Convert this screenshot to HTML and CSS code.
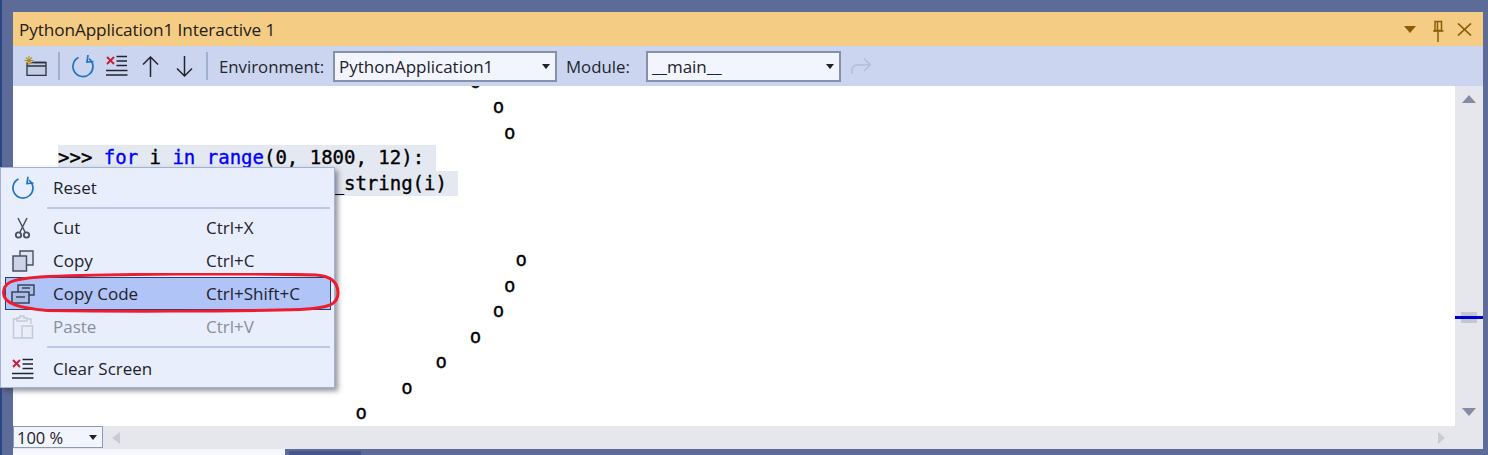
FILE: index.html
```html
<!DOCTYPE html>
<html lang="en">
<head>
<meta charset="utf-8">
<title>PythonApplication1 Interactive 1</title>
<link rel="stylesheet" href="styles.css">
</head>
<body>
<div class="shell">
  <div class="window">
    <header class="titlebar">
      <span class="title">PythonApplication1 Interactive 1</span>
      <div class="title-actions">
        <svg class="ti-menu" width="12" height="7" viewBox="0 0 12 7"><path d="M0 0h12L6 7z" fill="#8a5c06"/></svg>
        <svg class="ti-pin" width="11" height="26" viewBox="0 0 11 26"><path d="M2 3.500h6.500v9H2z M2 3.500h2.500v9" fill="none" stroke="#8a5c06" stroke-width="1.500"/><path d="M0 13h10.500M5 13v11" stroke="#8a5c06" stroke-width="1.500"/></svg>
        <svg class="ti-close" width="15" height="13" viewBox="0 0 15 13"><path d="M1 0.500l13 12M14 0.500L1 12.500" stroke="#8a5c06" stroke-width="1.700" fill="none"/></svg>
      </div>
    </header>
    <div class="toolbar">
      <svg class="tb-new" width="23" height="20" viewBox="0 0 23 20"><path d="M3 6.500h19v13H3z" fill="#c3cce5" stroke="#2b3240" stroke-width="1.300"/><path d="M10 6.500h12M3 10h19" stroke="#2b3240" stroke-width="1.600"/><circle cx="5" cy="4.500" r="2.600" fill="#fff4c8"/><path d="M5 0v9M.5 4.500h9M2 1.500l6 6M8 1.500l-6 6" stroke="#b08a2c" stroke-width="1.100"/></svg>
      <i class="sep sep-a"></i>
      <svg class="tb-reset" width="22" height="23" viewBox="0 0 22 23"><path d="M6.500 2.600A10 10 0 1 0 17 3.600" fill="none" stroke="#1f73c4" stroke-width="1.700"/><path d="M16 0L15 7L21.500 6.500" fill="none" stroke="#1f73c4" stroke-width="1.700"/></svg>
      <svg class="tb-clear" width="22" height="22" viewBox="0 0 22 22"><path d="M1 2l7 7M8 2L1 9" stroke="#c4203a" stroke-width="1.900"/><path d="M10.500 1.500h10.500M10.500 6h10.500M10.500 10.500h10.500M0 15.500h21.500M0 20h21.500" stroke="#20252e" stroke-width="1.500"/></svg>
      <svg class="tb-up" width="17" height="21" viewBox="0 0 17 21"><path d="M8.500 1v20M1 8.500L8.500 1l7.500 7.500" fill="none" stroke="#20252e" stroke-width="1.500"/></svg>
      <svg class="tb-down" width="17" height="21" viewBox="0 0 17 21"><path d="M8.500 0v20M1 12.500L8.500 20l7.500-7.500" fill="none" stroke="#20252e" stroke-width="1.500"/></svg>
      <i class="sep sep-b"></i>
      <span class="tb-label env-label">Environment:</span>
      <div class="combo env-combo"><span>PythonApplication1</span><i class="caret"></i></div>
      <span class="tb-label mod-label">Module:</span>
      <div class="combo mod-combo"><span>__main__</span><i class="caret"></i></div>
      <svg class="tb-redo" width="20" height="18" viewBox="0 0 20 18"><path d="M1 17v-4a5 5 0 0 1 5-5h13M13 1.500L19.500 8 13 14" fill="none" stroke="#b4bdd0" stroke-width="1.500"/></svg>
    </div>
    <div class="content">
      <div class="repl">
        <div class="line" style="padding-left:36ch">o</div>
        <div class="line" style="padding-left:38ch">o</div>
        <div class="line" style="padding-left:39ch">o</div>
        <div class="line"><span class="sel">&gt;&gt;&gt; <span class="kw">for</span> i <span class="kw">in</span> <span class="kw">range</span>(0, 1800, 12): </span></div>
        <div class="line"><span class="sel sel-rest">_string(i) </span></div>
        <div class="line"></div>
        <div class="line"></div>
        <div class="line" style="padding-left:40ch">o</div>
        <div class="line" style="padding-left:39ch">o</div>
        <div class="line" style="padding-left:38ch">o</div>
        <div class="line" style="padding-left:36ch">o</div>
        <div class="line" style="padding-left:33ch">o</div>
        <div class="line" style="padding-left:30ch">o</div>
        <div class="line" style="padding-left:26ch">o</div>
      </div>
      <div class="vscroll">
        <i class="arrow-up"></i>
        <i class="arrow-down"></i>
        <i class="thumb"></i>
        <i class="marker"></i>
      </div>
    </div>
    <div class="statusbar">
      <div class="zoom-combo"><span>100 %</span><i class="caret"></i></div>
      <i class="arrow-left"></i>
      <i class="arrow-right"></i>
    </div>
  </div>
  <div class="footer-strip"><i class="strip-light"></i><i class="strip-tab"></i></div>
</div>

<div class="menu">
  <div class="item">
    <svg class="mi" width="22" height="23" viewBox="0 0 22 23"><path d="M6.500 2.600A10 10 0 1 0 17 3.600" fill="none" stroke="#1f73c4" stroke-width="1.700"/><path d="M16 0L15 7L21.500 6.500" fill="none" stroke="#1f73c4" stroke-width="1.700"/></svg>
    <span class="name">Reset</span>
  </div>
  <hr class="msep">
  <div class="item">
    <svg class="mi" width="22" height="22" viewBox="0 0 22 22"><path d="M6 1l7 14M15 1L8 15" stroke="#4a5060" stroke-width="1.500" fill="none"/><circle cx="6.500" cy="18" r="2.700" fill="none" stroke="#4a5060" stroke-width="1.800"/><circle cx="14.500" cy="18" r="2.700" fill="none" stroke="#4a5060" stroke-width="1.800"/></svg>
    <span class="name">Cut</span><span class="key">Ctrl+X</span>
  </div>
  <div class="item">
    <svg class="mi" width="22" height="22" viewBox="0 0 22 22"><path d="M8 6V1h13v14h-6" fill="#dfe4f2" stroke="#4a5060" stroke-width="1.400"/><path d="M1 6h13.500v15H1z" fill="#ccd3e6" stroke="#4a5060" stroke-width="1.500"/></svg>
    <span class="name">Copy</span><span class="key">Ctrl+C</span>
  </div>
  <div class="item active">
    <svg class="mi" width="24" height="22" viewBox="0 0 24 22"><path d="M7 9V2h16v10h-5" fill="#a9bee8" stroke="#3d4658" stroke-width="1.500"/><path d="M11 5h8" stroke="#3d4658" stroke-width="1.500"/><path d="M1 9h17v11H1z" fill="#a9bee8" stroke="#3d4658" stroke-width="1.600"/><path d="M5 14h9" stroke="#3d4658" stroke-width="1.500"/></svg>
    <span class="name">Copy Code</span><span class="key">Ctrl+Shift+C</span>
  </div>
  <div class="item disabled">
    <svg class="mi" width="22" height="24" viewBox="0 0 22 24"><path d="M5 4H1.500v19H10" fill="none" stroke="#c4c9d4" stroke-width="1.400"/><path d="M16 4h3v5M5 3h3V1h4v2h3v3H5z" fill="none" stroke="#c4c9d4" stroke-width="1.400"/><path d="M10 11h10.500v12H10z" fill="#e8edf8" stroke="#c4c9d4" stroke-width="1.500"/></svg>
    <span class="name">Paste</span><span class="key">Ctrl+V</span>
  </div>
  <hr class="msep msep-b">
  <div class="item">
    <svg class="mi" width="22" height="22" viewBox="0 0 22 22"><path d="M1 2l7 7M8 2L1 9" stroke="#c4203a" stroke-width="1.900"/><path d="M10.500 1.500h10.500M10.500 6h10.500M10.500 10.500h10.500M0 15.500h21.500M0 20h21.500" stroke="#20252e" stroke-width="1.500"/></svg>
    <span class="name">Clear Screen</span>
  </div>
  <svg class="ring" width="342" height="40" viewBox="0 0 342 40"><path d="M40 4C100 1 250 0 316 2C330 3 338 9 338 20C338 31 330 35 300 36.500C230 38.500 110 38.500 47 37.500C20 35 3.500 31 3.500 20C3.500 10 10 6 40 4Z" fill="none" stroke="#ee1c2e" stroke-width="3"/></svg>
</div>
</body>
</html>
```

FILE: styles.css
```css
* { box-sizing: border-box; }
html, body { margin: 0; height: 100%; }
body {
  width: 1488px;
  height: 455px;
  overflow: hidden;
  background: #5d6b99;
  font-family: "Open Sans", "Noto Sans", sans-serif;
  color: #1e2229;
  position: relative;
}
.shell {
  height: 455px;
  padding: 12px 5px 0 13px;
  display: flex;
  flex-direction: column;
  background: linear-gradient(to right, #2b4783 2px, #5d6b99 2px);
}
.window { height: 437px; display: flex; flex-direction: column; }

.titlebar {
  height: 34px;
  background: #f5cc84;
  display: flex;
  align-items: center;
  justify-content: space-between;
  padding: 0 11px 0 6px;
}
.title { font-size: 17.200px; letter-spacing: -0.1px; color: #22201a; }
.title-actions { display: flex; align-items: center; }
.ti-menu { margin-right: 17px; }
.ti-pin { margin-right: 13px; margin-top: 3px; }

.toolbar {
  height: 40px;
  background: #ccd5f0;
  display: flex;
  align-items: center;
  padding-left: 11px;
  flex: none;
}
.sep { display: block; width: 2px; height: 28px; background: #9fb0d0; }
.sep-a { margin: 0 12px 0 11px; }
.sep-b { margin: 0 11px 0 13px; }
.tb-clear { margin-left: 12px; }
.tb-up { margin-left: 14px; }
.tb-down { margin-left: 17px; }
.tb-label { font-size: 16.800px; color: #22262e; white-space: nowrap; }
.env-label { width: 114px; }
.mod-label { width: 80px; margin-left: 9px; }
.combo {
  height: 31px;
  border: 2px solid #8591a8;
  background: #f2f5fe;
  display: flex;
  align-items: center;
  justify-content: space-between;
  padding: 1px 5px 0 4px;
  font-size: 17px;
}
.env-combo { width: 224px; }
.mod-combo { width: 195px; }
.caret {
  display: block;
  width: 0;
  height: 0;
  border-left: 4.500px solid transparent;
  border-right: 4.500px solid transparent;
  border-top: 5px solid #1e2229;
}
.tb-redo { margin-left: 10px; }

.content { flex: 1; min-height: 0; display: flex; background: #fff; }
.repl {
  flex: 1;
  padding-left: 45px;
  overflow: hidden;
  font-family: "DejaVu Sans Mono", "Liberation Mono", monospace;
  font-size: 19px;
  color: #000;
  -webkit-text-stroke: 0.35px #000;
}
.line { height: 25.500px; line-height: 25.500px; white-space: pre; }
.line:first-child { margin-top: -17.500px; }
.sel { display: inline-block; background: #e4e8f0; height: 25.500px; }
.sel-rest { padding-left: 24ch; }
.kw { color: #0000ff; -webkit-text-stroke: 0.35px #0000ff; }

.vscroll {
  flex: none;
  width: 28px;
  background: #e6e7ed;
  position: relative;
  display: flex;
  flex-direction: column;
  align-items: center;
  justify-content: space-between;
  padding: 9px 0 10px;
}
.arrow-up {
  width: 0; height: 0;
  border-left: 7px solid transparent;
  border-right: 7px solid transparent;
  border-bottom: 8px solid #868ba5;
}
.arrow-down {
  width: 0; height: 0;
  border-left: 7px solid transparent;
  border-right: 7px solid transparent;
  border-top: 8px solid #868ba5;
}
.thumb { position: absolute; left: 6px; top: 226px; width: 16px; height: 11px; background: #c4c6d2; }
.marker { position: absolute; left: 0; top: 230px; width: 28px; height: 2.500px; background: #0000d0; }

.statusbar {
  height: 23px;
  flex: none;
  background: #e6e7ed;
  display: flex;
  align-items: center;
}
.zoom-combo {
  width: 90px;
  height: 22px;
  align-self: flex-start;
  border: 1px solid #8d9ab5;
  background: #f2f5fe;
  display: flex;
  align-items: center;
  justify-content: space-between;
  padding: 0 5px 0 3px;
  font-size: 16.500px;
}
.arrow-left {
  margin-left: 9px;
  width: 0; height: 0;
  border-top: 6.500px solid transparent;
  border-bottom: 6.500px solid transparent;
  border-right: 8px solid #c8cad5;
}
.arrow-right {
  margin-left: auto;
  margin-right: 38px;
  width: 0; height: 0;
  border-top: 6.500px solid transparent;
  border-bottom: 6.500px solid transparent;
  border-left: 7px solid #c8cad5;
}

.footer-strip { height: 6px; display: flex; align-items: flex-end; }
.strip-light { display: block; width: 272px; height: 6px; background: #f5f7fd; }
.strip-tab { display: block; width: 72px; height: 4px; margin-left: 4px; background: #47568a; }

.menu {
  position: absolute;
  left: 0;
  top: 167px;
  width: 335px;
  height: 221px;
  background: #e8eefc;
  border: 1px solid #a3b2d4;
  box-shadow: 3px 3px 5px rgba(40, 45, 60, 0.5);
  padding-top: 3px;
  font-size: 17px;
}
.item {
  height: 33px;
  display: flex;
  align-items: center;
  position: relative;
  color: #1e2229;
  margin: 0 3px 0 1px;
}
.item .mi { position: absolute; left: 10px; top: 50%; transform: translateY(-50%); }
.item .name { margin-left: 51px; width: 153px; white-space: nowrap; }
.item .key { white-space: nowrap; }
.item.active { background: #b0c4f8; border: 1px solid #24406e; margin-left: 4px; }
.item.active .mi { left: 5px; }
.item.active .name { margin-left: 47px; }
.item.disabled { color: #8a8f9a; }
.msep {
  margin: 3px 4px 2px 46px;
  height: 2px;
  border: 0;
  background: #bcc8e4;
}
.msep-b { margin-bottom: 4px; }
.ring { position: absolute; left: -1px; top: 105px; }
```
